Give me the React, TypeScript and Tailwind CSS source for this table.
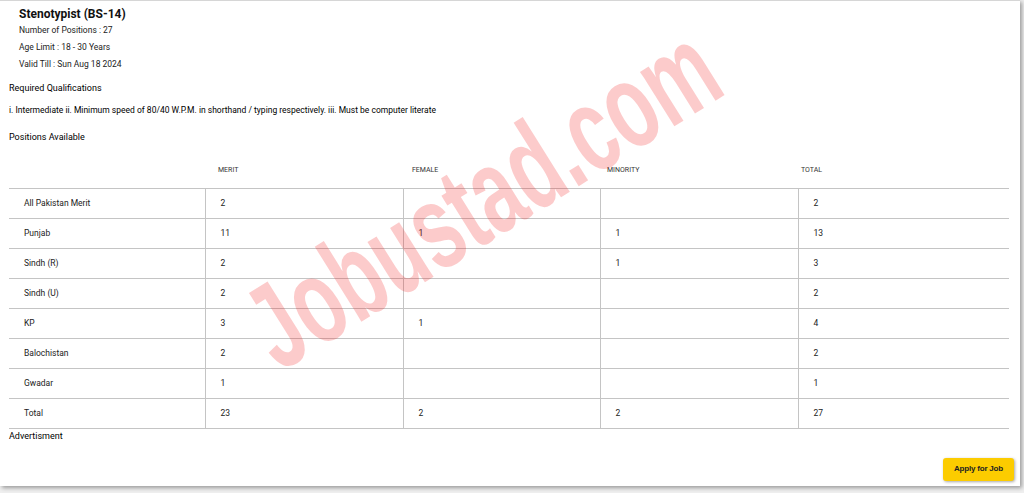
const rows = [
  { name: "All Pakistan Merit", merit: "2", female: "", minority: "", total: "2" },
  { name: "Punjab", merit: "11", female: "1", minority: "1", total: "13" },
  { name: "Sindh (R)", merit: "2", female: "", minority: "1", total: "3" },
  { name: "Sindh (U)", merit: "2", female: "", minority: "", total: "2" },
  { name: "KP", merit: "3", female: "1", minority: "", total: "4" },
  { name: "Balochistan", merit: "2", female: "", minority: "", total: "2" },
  { name: "Gwadar", merit: "1", female: "", minority: "", total: "1" },
  { name: "Total", merit: "23", female: "2", minority: "2", total: "27" },
]

const App = () => {
  return (
    <div className="min-h-[493px] w-[1024px] bg-[#efefef] font-['Roboto','Liberation_Sans',sans-serif] text-[#222]">
      <div className="relative w-[1020px] h-[486px] bg-white border-t border-[#d6d6d6] shadow-[2px_2px_4px_rgba(0,0,0,0.35)] overflow-hidden">
        <div className="px-[9px] pt-[6px]">
          <div className="pl-[10px]">
            <h2 className="text-[12px] leading-[15px] font-bold text-[#111]">Stenotypist (BS-14)</h2>
            <p className="text-[8.5px] leading-[17px]">Number of Positions : 27</p>
            <p className="text-[8.5px] leading-[17px]">Age Limit : 18 - 30 Years</p>
            <p className="text-[8.5px] leading-[17px]">Valid Till : Sun Aug 18 2024</p>
          </div>
          <p className="mt-[7px] text-[9px] leading-[16px] text-black">Required Qualifications</p>
          <p className="mt-[6px] text-[8.5px] leading-[16px] text-black">
            i. Intermediate ii. Minimum speed of 80/40 W.P.M. in shorthand / typing respectively. iii. Must be computer literate
          </p>
          <p className="mt-[11px] text-[9px] leading-[16px] text-black">Positions Available</p>

          <table className="w-[1000px] border-collapse table-fixed text-[8.5px]">
            <colgroup>
              <col className="w-[196px]" />
              <col className="w-[198px]" />
              <col className="w-[197px]" />
              <col className="w-[198px]" />
              <col className="w-[211px]" />
            </colgroup>
            <thead>
              <tr className="h-[43px] border-b border-[#c4c4c4]">
                <th></th>
                <th className="text-left font-normal text-[7px] pl-[13px] pt-[8px] text-[#333]">MERIT</th>
                <th className="text-left font-normal text-[7px] pl-[9px] pt-[8px] text-[#333]">FEMALE</th>
                <th className="text-left font-normal text-[7px] pl-[7px] pt-[8px] text-[#333]">MINORITY</th>
                <th className="text-left font-normal text-[7px] pl-[3px] pt-[8px] text-[#333]">TOTAL</th>
              </tr>
            </thead>
            <tbody>
              {rows.map((r) => (
                <tr key={r.name} className="h-[30px] border-b border-[#c4c4c4]">
                  <td className="pl-[15px]">{r.name}</td>
                  <td className="pl-[15px] border-l border-[#c4c4c4]">{r.merit}</td>
                  <td className="pl-[15px] border-l border-[#c4c4c4]">{r.female}</td>
                  <td className="pl-[15px] border-l border-[#c4c4c4]">{r.minority}</td>
                  <td className="pl-[15px] border-l border-[#c4c4c4]">{r.total}</td>
                </tr>
              ))}
            </tbody>
          </table>

          <p className="text-[9px] leading-[14px] text-black">Advertisment</p>
          <div className="flex justify-end mt-[15px]">
            <button className="mr-[-3px] w-[71px] h-[23px] rounded-[3px] bg-[#fccc00] shadow-[1px_1px_3px_rgba(0,0,0,0.35)] font-['Liberation_Sans',sans-serif] font-bold text-[8px] tracking-[-0.2px] text-[#222]">
              Apply for Job
            </button>
          </div>
        </div>

        <div className="pointer-events-none absolute left-[482px] top-[196px] -translate-x-1/2 -translate-y-1/2">
          <div className="rotate-[-32deg]">
            <div className="scale-x-[0.64] font-['Liberation_Sans',sans-serif] font-bold text-[122px] leading-none whitespace-nowrap text-[rgba(240,20,20,0.22)]">
              Jobustad.com
            </div>
          </div>
        </div>
      </div>
    </div>
  )
}

export default App
